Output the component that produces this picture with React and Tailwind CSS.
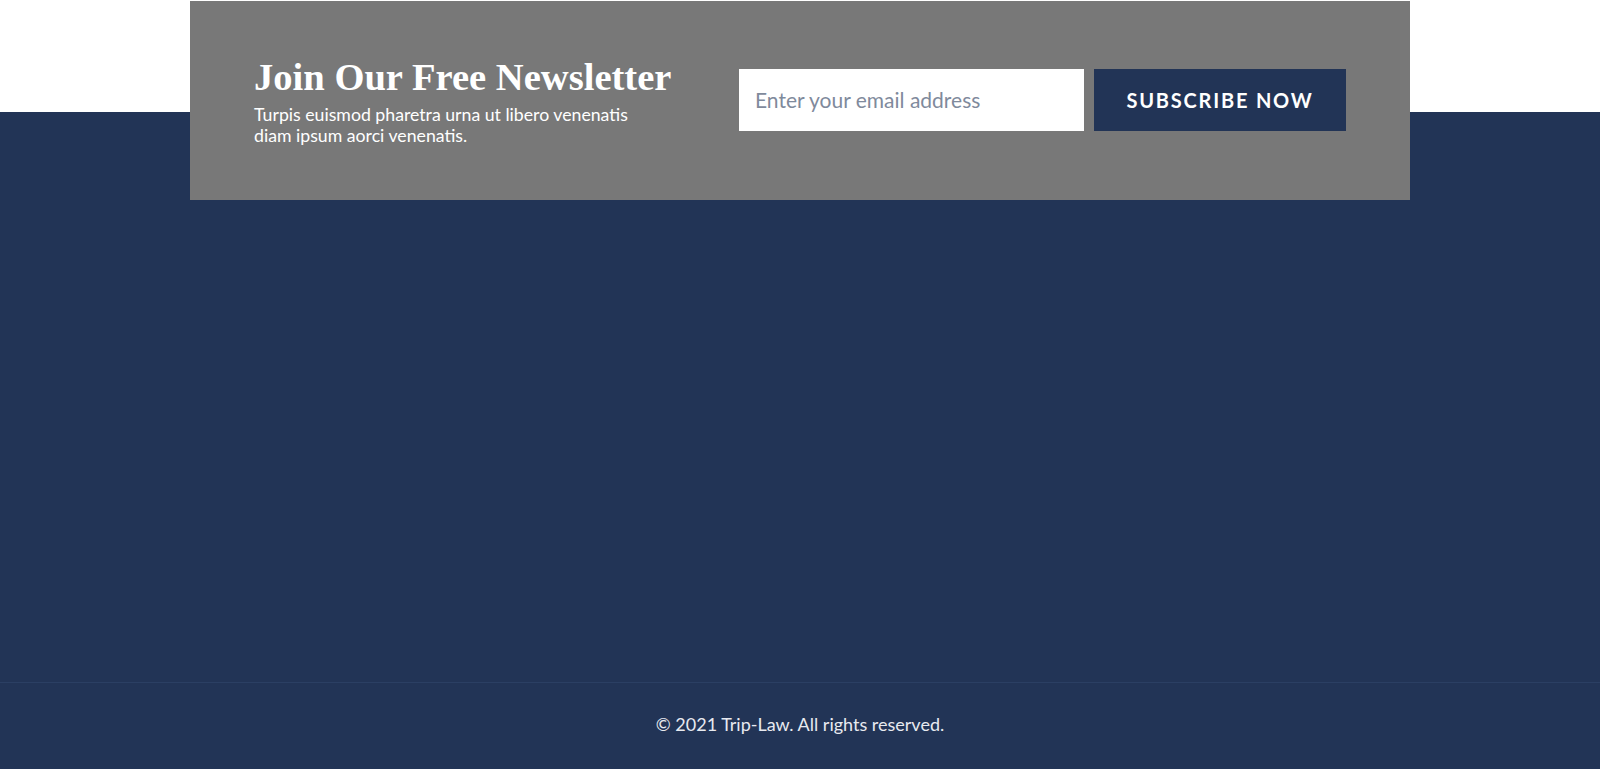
import React from 'react';

export default function App() {
  return (
    <div className="min-h-[769px] flex flex-col bg-[linear-gradient(to_bottom,#ffffff_112px,#223456_112px)] font-['Lato','Noto_Sans',sans-serif]">
      <div className="pt-px">
        <div className="mx-auto w-[1220px] h-[199px] bg-[#787878] px-[64px] flex items-center">
          <div className="w-[440px] -mt-[1px]">
            <h2 className="text-white text-[38.6px] leading-[46px] font-bold font-['Liberation_Serif',serif]">
              Join Our Free Newsletter
            </h2>
            <p className="mt-[4px] text-white text-[17.7px] leading-[21px] max-w-[400px]">
              Turpis euismod pharetra urna ut libero venenatis diam ipsum aorci venenatis.
            </p>
          </div>
          <form className="ml-auto -mt-[2px] flex gap-[10px]" onSubmit={(e) => e.preventDefault()}>
            <input
              type="email"
              placeholder="Enter your email address"
              className="w-[345px] h-[62px] bg-white px-[16px] text-[21px] text-gray-700 placeholder:text-[#7f8a9c] outline-none"
            />
            <button
              type="submit"
              className="w-[252px] h-[62px] bg-[#223456] text-white text-[20px] font-bold tracking-[1.8px] uppercase"
            >
              Subscribe Now
            </button>
          </form>
        </div>
      </div>

      <div className="flex-1" />

      <footer className="h-[87px] pb-[4px] border-t border-[#2b3f63] flex items-center justify-center">
        <p className="text-[18px] text-[#e8eaf0]">© 2021 Trip-Law. All rights reserved.</p>
      </footer>
    </div>
  );
}
